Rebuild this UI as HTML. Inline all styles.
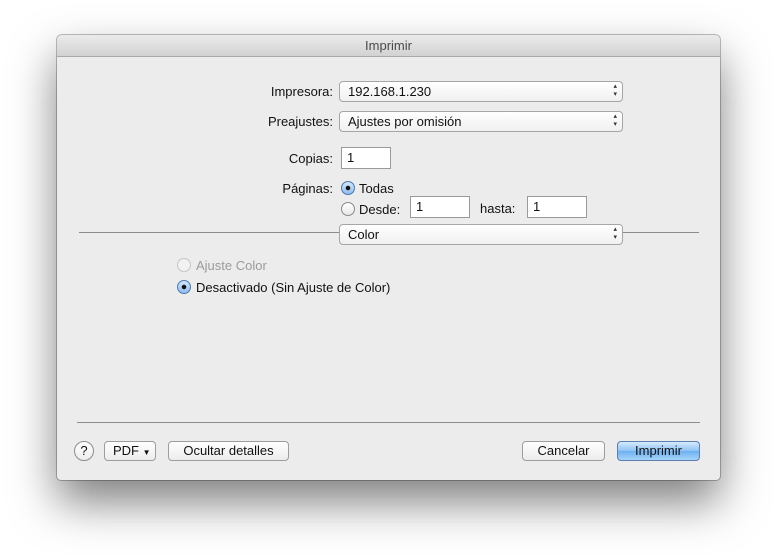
<!DOCTYPE html>
<html><head><meta charset="utf-8"><style>
body{margin:0;width:777px;height:560px;background:#fff;position:relative;overflow:hidden;font-family:"Liberation Sans",sans-serif;font-size:13px;color:#111}
.win{position:absolute;left:57px;top:35px;width:663px;height:445px;background:#ececec;border-radius:5px 5px 4px 4px;box-shadow:0 22px 45px rgba(0,0,0,.5),0 0 0 1px rgba(0,0,0,.25)}
.title{position:absolute;left:0;top:0;width:663px;height:21px;border-radius:5px 5px 0 0;background:linear-gradient(#ebebeb,#d2d2d2);border-bottom:1px solid #a9a9a9;text-align:center;line-height:22px;color:#4a4a4a}
.a{position:absolute}
.lbl{position:absolute;text-align:right;width:120px}
.pop{position:absolute;border:1px solid #a6a6a6;border-radius:4px;background:linear-gradient(#fff,#f0f0f0);line-height:19px;padding-left:8px;box-sizing:border-box;height:21px}
.pop:after{content:"▴\A▾";white-space:pre;position:absolute;right:5px;top:1px;font-size:7px;line-height:8px;color:#333}
.inp{position:absolute;height:22px;border:1px solid #9a9a9a;background:#fff;box-sizing:border-box;line-height:20px;padding-left:5px}
.rad{position:absolute;width:14px;height:14px;border-radius:50%;border:1px solid #8a8a8a;background:linear-gradient(#fff,#e8e8e8);box-sizing:border-box}
.rad.on{border-color:#4a78b0;background:radial-gradient(circle,#111 0 2px,transparent 2.5px),linear-gradient(#d3e6fa,#8fbdf0)}
.btn{position:absolute;height:20px;border:1px solid #9d9d9d;border-radius:4px;background:linear-gradient(#fff,#ececec);box-sizing:border-box;text-align:center;line-height:18px}
</style></head><body>
<div class="win">
<div class="title">Imprimir</div>
<div class="lbl" style="left:156px;top:49px">Impresora:</div>
<div class="pop" style="left:282px;top:46px;width:284px">192.168.1.230</div>
<div class="lbl" style="left:156px;top:79px">Preajustes:</div>
<div class="pop" style="left:282px;top:76px;width:284px">Ajustes por omisión</div>
<div class="lbl" style="left:156px;top:116px">Copias:</div>
<div class="inp" style="left:284px;top:112px;width:50px">1</div>
<div class="lbl" style="left:156px;top:146px">Páginas:</div>
<div class="rad on" style="left:284px;top:146px"></div><div class="a" style="left:302px;top:146px">Todas</div>
<div class="rad" style="left:284px;top:167px"></div><div class="a" style="left:302px;top:167px">Desde:</div>
<div class="inp" style="left:353px;top:161px;width:60px">1</div>
<div class="a" style="left:423px;top:166px">hasta:</div>
<div class="inp" style="left:470px;top:161px;width:60px">1</div>
<div class="a" style="left:22px;top:197px;width:620px;height:1px;background:#8d8d8d"></div>
<div class="pop" style="left:282px;top:189px;width:284px">Color</div>
<div class="rad" style="left:120px;top:223px;border-color:#c4c4c4;background:#f2f2f2"></div><div class="a" style="left:139px;top:223px;color:#9a9a9a">Ajuste Color</div>
<div class="rad on" style="left:120px;top:245px"></div><div class="a" style="left:139px;top:245px">Desactivado (Sin Ajuste de Color)</div>
<div class="a" style="left:20px;top:387px;width:623px;height:1px;background:#8d8d8d"></div>
<div class="a" style="left:17px;top:406px;width:20px;height:20px;border-radius:50%;border:1px solid #8d8d8d;box-sizing:border-box;background:linear-gradient(#fff,#ececec);text-align:center;line-height:18px;font-size:13px">?</div>
<div class="btn" style="left:47px;top:406px;width:52px;text-align:left;padding-left:8px">PDF <span style="font-size:8px">▼</span></div>
<div class="btn" style="left:111px;top:406px;width:121px">Ocultar detalles</div>
<div class="btn" style="left:465px;top:406px;width:83px">Cancelar</div>
<div class="btn" style="left:560px;top:406px;width:83px;border-color:#5b7fae;background:linear-gradient(#d6eafd,#8dc2f5 50%,#6db0f0 51%,#a6d4fb)">Imprimir</div>
</div>
</body></html>
